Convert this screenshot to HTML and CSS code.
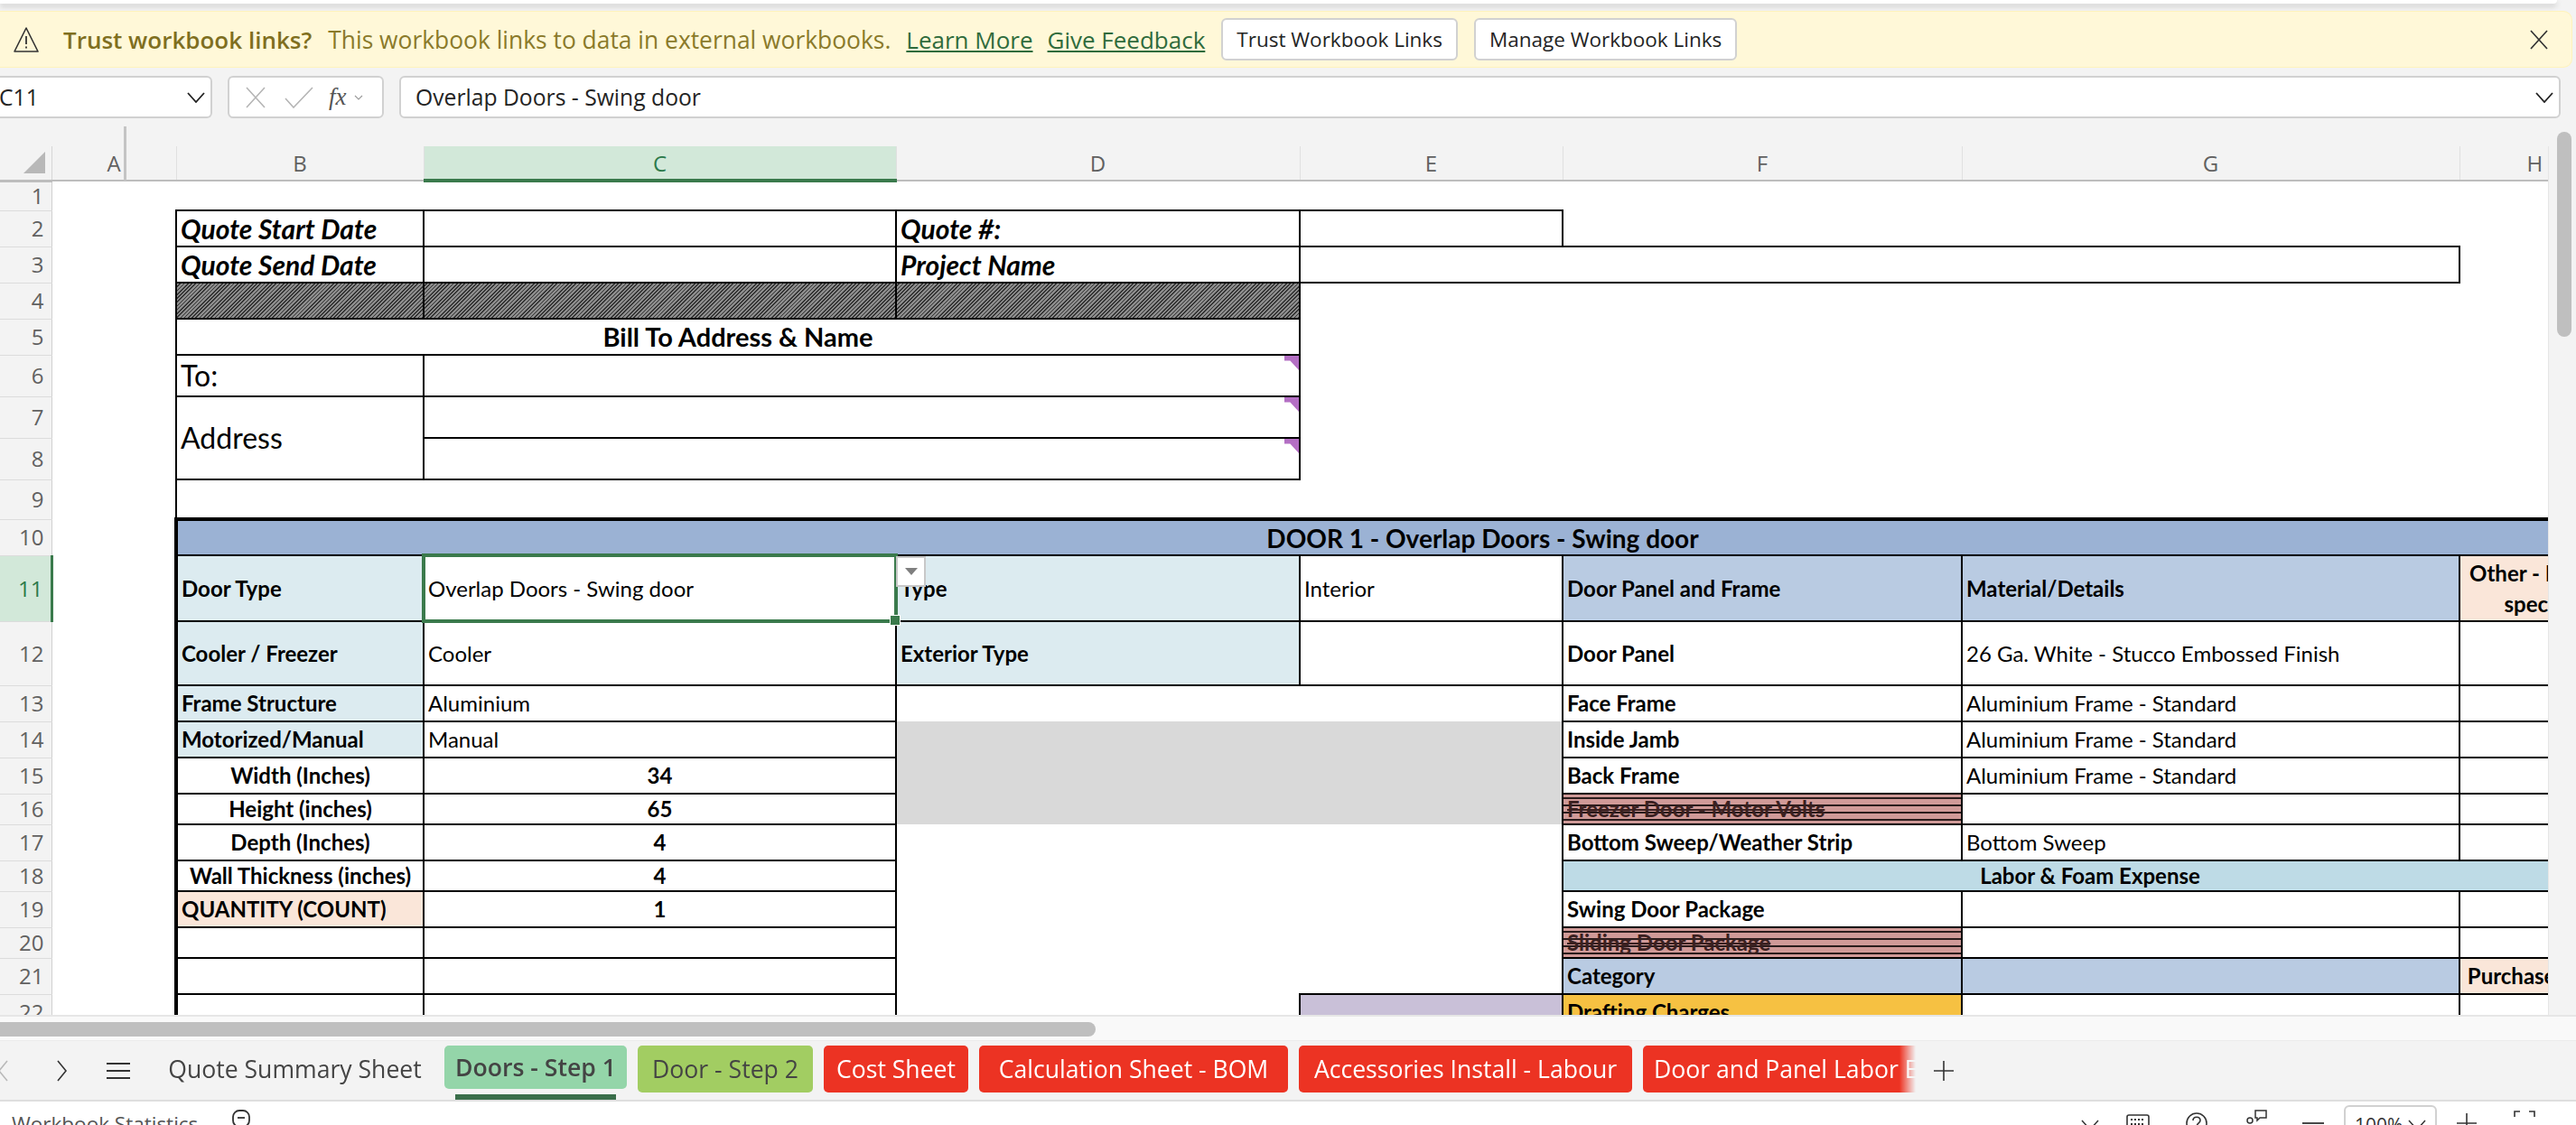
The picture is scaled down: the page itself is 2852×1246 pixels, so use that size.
FILE: index.html
```html
<!DOCTYPE html>
<html lang="en">

<head>
    <meta charset="UTF-8">
    <meta name="viewport" content="width=device-width, initial-scale=1.0">
    <title>Doors - Step 1</title>
    <link rel="stylesheet" href="styles.css">
</head>

<body>
    <div class="top-strip"></div>

    <div class="msgbar">
        <svg class="warn-icon" viewBox="0 0 30 30" width="30" height="30"><path d="M15 2 L28 28 H2 Z" fill="none" stroke="#333" stroke-width="1.6" stroke-linejoin="round"/><path d="M15 11 V20 M15 22.5 V24.5" stroke="#333" stroke-width="1.8"/></svg>
        <b class="msg-title">Trust workbook links?</b>
        <span class="msg-text">This workbook links to data in external workbooks.</span>
        <a class="msg-link">Learn More</a>
        <a class="msg-link">Give Feedback</a>
        <button class="msg-btn">Trust Workbook Links</button>
        <button class="msg-btn">Manage Workbook Links</button>
        <svg class="msg-close" viewBox="0 0 22 22" width="22" height="22"><path d="M2 1 L20 21 M20 1 L2 21" stroke="#333" stroke-width="1.7"/></svg>
    </div>

    <div class="formula-bar">
        <div class="name-box">
            <span class="name-text">C11</span>
            <svg viewBox="0 0 20 12" width="20" height="12"><path d="M1 1 L10 11 L19 1" fill="none" stroke="#222" stroke-width="1.8"/></svg>
        </div>
        <div class="fx-box">
            <svg viewBox="0 0 24 24" width="24" height="24"><path d="M2 1 L22 23 M22 1 L2 23" stroke="#b5b5b5" stroke-width="1.6"/></svg>
            <svg viewBox="0 0 32 24" width="32" height="24"><path d="M1 13 L10 23 L31 1" fill="none" stroke="#b5b5b5" stroke-width="1.6"/></svg>
            <span class="fx-text">fx</span>
            <svg viewBox="0 0 10 6" width="10" height="6"><path d="M1 1 L5 5 L9 1" fill="none" stroke="#999" stroke-width="1.1"/></svg>
        </div>
        <div class="formula-input">
            <span>Overlap Doors - Swing door</span>
            <svg viewBox="0 0 20 12" width="20" height="12"><path d="M1 1 L10 11 L19 1" fill="none" stroke="#222" stroke-width="1.8"/></svg>
        </div>
    </div>

    <div class="workspace">
        <div class="sheet-wrap">
            <table class="sheet">
                <colgroup>
                    <col class="c-rh"><col class="c-a"><col class="c-b"><col class="c-c"><col class="c-d">
                    <col class="c-e"><col class="c-f"><col class="c-g"><col class="c-h"><col class="c-i">
                </colgroup>
                <tr class="h-head">
                    <th class="corner"><span class="corner-mark"></span></th>
                    <th class="ch">A</th><th class="ch">B</th><th class="ch ch-sel">C</th><th class="ch">D</th>
                    <th class="ch">E</th><th class="ch">F</th><th class="ch">G</th><th class="ch ch-h">H</th><th class="ch"></th>
                </tr>
                <tr class="h33"><th class="rh">1</th></tr>
                <tr class="h40"><th class="rh">2</th><td></td>
                    <td class="box big it">Quote Start Date</td><td class="box"></td><td class="box big it">Quote #:</td><td class="box"></td></tr>
                <tr class="h40"><th class="rh">3</th><td></td>
                    <td class="box big it">Quote Send Date</td><td class="box"></td><td class="box big it">Project Name</td><td class="box" colspan="3"></td></tr>
                <tr class="h40"><th class="rh">4</th><td></td>
                    <td class="box hatch"></td><td class="box hatch"></td><td class="box hatch"></td></tr>
                <tr class="h40"><th class="rh">5</th><td></td>
                    <td class="box big bold center" colspan="3">Bill To Address &amp; Name</td></tr>
                <tr class="h46"><th class="rh">6</th><td></td>
                    <td class="box large">To:</td><td class="box note" colspan="2"></td></tr>
                <tr class="h46"><th class="rh">7</th><td></td>
                    <td class="box large" rowspan="2">Address</td><td class="box note" colspan="2"></td></tr>
                <tr class="h46"><th class="rh">8</th><td></td>
                    <td class="box note" colspan="2"></td></tr>
                <tr class="h44"><th class="rh">9</th><td></td><td class="left-edge"></td></tr>
                <tr class="h40"><th class="rh">10</th><td></td>
                    <td class="box title bold center door-title" colspan="8">DOOR 1 - Overlap Doors - Swing door</td></tr>
                <tr class="h73"><th class="rh rh-sel">11</th><td></td>
                    <td class="box edge bold pale">Door Type</td>
                    <td class="box sel">Overlap Doors - Swing door<span class="dd-btn"><svg viewBox="0 0 16 10" width="16" height="10"><path d="M1 1 H15 L8 9 Z" fill="#7f7f7f"/></svg></span></td>
                    <td class="box bold pale">Type</td><td class="box">Interior</td>
                    <td class="box bold steel">Door Panel and Frame</td><td class="box bold steel">Material/Details</td>
                    <td class="box bold center peach">Other - Please specify</td></tr>
                <tr class="h71"><th class="rh">12</th><td></td>
                    <td class="box edge bold pale">Cooler / Freezer</td><td class="box">Cooler</td>
                    <td class="box bold pale">Exterior Type</td><td class="box"></td>
                    <td class="box bold">Door Panel</td><td class="box">26 Ga. White - Stucco Embossed Finish</td><td class="box"></td></tr>
                <tr class="h40"><th class="rh">13</th><td></td>
                    <td class="box edge bold pale">Frame Structure</td><td class="box">Aluminium</td>
                    <td class="plain" colspan="2"></td>
                    <td class="box bold">Face Frame</td><td class="box">Aluminium Frame - Standard</td><td class="box"></td></tr>
                <tr class="h40"><th class="rh">14</th><td></td>
                    <td class="box edge bold pale">Motorized/Manual</td><td class="box">Manual</td>
                    <td class="grey" colspan="2" rowspan="3"></td>
                    <td class="box bold">Inside Jamb</td><td class="box">Aluminium Frame - Standard</td><td class="box"></td></tr>
                <tr class="h40"><th class="rh">15</th><td></td>
                    <td class="box edge bold center">Width (Inches)</td><td class="box bold center">34</td>
                    <td class="box bold">Back Frame</td><td class="box">Aluminium Frame - Standard</td><td class="box"></td></tr>
                <tr class="h34"><th class="rh">16</th><td></td>
                    <td class="box edge bold center">Height (inches)</td><td class="box bold center">65</td>
                    <td class="box bold struck">Freezer Door - Motor Volts</td><td class="box"></td><td class="box"></td></tr>
                <tr class="h40"><th class="rh">17</th><td></td>
                    <td class="box edge bold center">Depth (Inches)</td><td class="box bold center">4</td>
                    <td class="plain" colspan="2" rowspan="5"></td>
                    <td class="box bold">Bottom Sweep/Weather Strip</td><td class="box">Bottom Sweep</td><td class="box"></td></tr>
                <tr class="h34"><th class="rh">18</th><td></td>
                    <td class="box edge bold center">Wall Thickness (inches)</td><td class="box bold center">4</td>
                    <td class="box bold center labor" colspan="3">Labor &amp; Foam Expense</td></tr>
                <tr class="h40"><th class="rh">19</th><td></td>
                    <td class="box edge bold peach">QUANTITY (COUNT)</td><td class="box bold center">1</td>
                    <td class="box bold">Swing Door Package</td><td class="box"></td><td class="box"></td></tr>
                <tr class="h34"><th class="rh">20</th><td></td>
                    <td class="box edge"></td><td class="box"></td>
                    <td class="box bold struck">Sliding Door Package</td><td class="box"></td><td class="box"></td></tr>
                <tr class="h40"><th class="rh">21</th><td></td>
                    <td class="box edge"></td><td class="box"></td>
                    <td class="box bold steel">Category</td><td class="box steel"></td><td class="box bold center peach">Purchase Price</td></tr>
                <tr class="h40"><th class="rh">22</th><td></td>
                    <td class="box edge"></td><td class="box"></td><td class="plain"></td><td class="box lilac"></td>
                    <td class="box bold amber">Drafting Charges</td><td class="box"></td><td class="box"></td></tr>
            </table>
        </div>
        <div class="freeze-line"></div>
        <div class="vscroll"><div class="vthumb"></div></div>
    </div>

    <div class="hscroll"><div class="hthumb"></div></div>

    <div class="tabbar">
        <svg class="nav-icon nav-left" viewBox="0 0 12 24" width="12" height="24"><path d="M11 1 L2 12 L11 23" fill="none" stroke="#b9b9b9" stroke-width="1.6"/></svg>
        <svg class="nav-icon nav-right" viewBox="0 0 12 24" width="12" height="24"><path d="M1 1 L10 12 L1 23" fill="none" stroke="#333" stroke-width="1.6"/></svg>
        <svg class="nav-icon nav-menu" viewBox="0 0 26 20" width="26" height="20"><path d="M0 2 H26 M0 10 H26 M0 18 H26" stroke="#333" stroke-width="1.8"/></svg>
        <div class="tab-list">
            <div class="tab tab-quote">Quote Summary Sheet</div>
            <div class="tab tab-active">Doors - Step 1</div>
            <div class="tab tab-olive">Door - Step 2</div>
            <div class="tab tab-red tab-cost">Cost Sheet</div>
            <div class="tab tab-red tab-calc">Calculation Sheet - BOM</div>
            <div class="tab tab-red tab-acc">Accessories Install - Labour</div>
            <div class="tab tab-red">Door and Panel Labor Estimate</div>
        </div>
        <svg class="add-tab" viewBox="0 0 24 24" width="24" height="24"><path d="M12 1 V23 M1 12 H23" stroke="#333" stroke-width="1.6"/></svg>
    </div>

    <div class="statusbar">
        <span class="status-text">Workbook Statistics</span>
        <svg class="status-calc" viewBox="0 0 24 24" width="24" height="24"><rect x="3" y="5" width="18" height="18" rx="7" fill="none" stroke="#333" stroke-width="1.8"/><path d="M8 13 H16" stroke="#333" stroke-width="1.8"/></svg>
        <div class="status-right">
            <svg viewBox="0 0 20 12" width="20" height="12" class="s-chev"><path d="M1 1 L10 11 L19 1" fill="none" stroke="#333" stroke-width="1.5"/></svg>
            <svg viewBox="0 0 26 24" width="26" height="24" class="s-key"><rect x="1" y="1" width="24" height="22" rx="2" fill="none" stroke="#333" stroke-width="1.6"/><path d="M5 6 H21 M5 11 H21" stroke="#333" stroke-width="1.8" stroke-dasharray="2 2"/></svg>
            <svg viewBox="0 0 24 24" width="24" height="24" class="s-help"><circle cx="12" cy="12" r="11" fill="none" stroke="#333" stroke-width="1.6"/><path d="M8 9 C8 4 16 4 16 9 C16 12 12 12 12 16 M12 18 V20" fill="none" stroke="#333" stroke-width="1.6"/></svg>
            <svg viewBox="0 0 24 18" width="24" height="18" class="s-chat"><circle cx="4" cy="12" r="3" fill="none" stroke="#333" stroke-width="1.5"/><path d="M10 1 H22 V9 H15 L12 12 V9 H10 Z" fill="none" stroke="#333" stroke-width="1.5"/></svg>
            <svg viewBox="0 0 24 4" width="24" height="4" class="s-minus"><path d="M0 2 H24" stroke="#333" stroke-width="1.8"/></svg>
            <div class="zoom-box">100%<svg viewBox="0 0 20 12" width="20" height="12"><path d="M1 1 L10 11 L19 1" fill="none" stroke="#333" stroke-width="1.5"/></svg></div>
            <svg viewBox="0 0 24 24" width="24" height="24" class="s-plus"><path d="M12 1 V23 M1 12 H23" stroke="#333" stroke-width="1.6"/></svg>
            <svg viewBox="0 0 24 24" width="24" height="24" class="s-full"><path d="M1 7 V1 H7 M17 1 H23 V7 M1 17 V23 H7 M17 23 H23 V17" fill="none" stroke="#333" stroke-width="1.6"/></svg>
        </div>
    </div>
</body>

</html>
```

FILE: styles.css
```css
* {
    box-sizing: border-box;
}

html,
body {
    height: 100%;
}

body {
    margin: 0;
    overflow: hidden;
    display: flex;
    flex-direction: column;
    background-color: #f3f3f3;
    font-family: "Open Sans", sans-serif;
    color: #242424;
}

.top-strip {
    flex: none;
    height: 4px;
    width: 2831px;
    background-color: #fff;
    border-radius: 0 0 6px 0;
    box-shadow: 0 3px 6px rgba(0, 0, 0, 0.18);
}

/* message bar */
.msgbar {
    flex: none;
    height: 63px;
    margin: 8px 4px 0 0;
    padding-left: 14px;
    display: flex;
    align-items: center;
    background-color: #fff8d8;
    border: 1px solid #fff3bc;
    border-left: 0;
    border-radius: 0 10px 10px 0;
    font-size: 26px;
}

.warn-icon {
    margin-right: 26px;
}

.msg-title {
    color: #7f6f1f;
    font-weight: 600;
    margin-right: 18px;
}

.msg-text {
    color: #8a7a2a;
    font-size: 26.4px;
    margin-right: 17px;
}

.msg-link {
    color: #2f6b3c;
    text-decoration: underline;
    margin-right: 16px;
}

.msg-btn {
    height: 47px;
    margin-left: 2px;
    margin-right: 16px;
    padding: 0 15px;
    background-color: #fff;
    border: 2px solid #d1d1d1;
    border-radius: 6px;
    font-family: "Open Sans", sans-serif;
    font-size: 22.5px;
    color: #242424;
}

.msg-close {
    margin-left: auto;
    margin-right: 25px;
}

/* formula bar */
.formula-bar {
    flex: none;
    height: 47px;
    margin-top: 9px;
    padding-right: 17px;
    display: flex;
    gap: 17px;
}

.name-box,
.fx-box,
.formula-input {
    display: flex;
    align-items: center;
    background-color: #fff;
    border: 2px solid #d1d1d1;
    border-radius: 6px;
    font-size: 24.7px;
}

.name-box {
    width: 235px;
    border-left: 0;
    border-radius: 0 6px 6px 0;
    justify-content: space-between;
    padding-right: 6px;
}

.name-text {
    margin-left: -1px;
}

.fx-box {
    width: 173px;
    padding-left: 17px;
    gap: 20px;
    color: #555;
}

.fx-text {
    font-family: "Liberation Serif", serif;
    font-style: italic;
    font-size: 27px;
    margin-left: -3px;
    margin-right: -12px;
}

.formula-input {
    flex: 1;
    justify-content: space-between;
    padding: 0 6px 0 16px;
}

/* sheet */
.workspace {
    position: relative;
    flex: 1;
    min-height: 0;
    display: flex;
    padding-top: 31px;
}

.sheet-wrap {
    width: 2822px;
    overflow: hidden;
    background-color: #fff;
    border-right: 1px solid #e6e6e6;
}

.freeze-line {
    position: absolute;
    left: 137px;
    top: 9px;
    width: 3px;
    height: 60px;
    background-color: #c4c4c4;
}

.sheet {
    border-collapse: collapse;
    table-layout: fixed;
    width: 3087px;
    font-family: Lato, "Liberation Sans", sans-serif;
    font-size: 24px;
    color: #000;
}

.c-rh { width: 57px; }
.c-a { width: 138px; }
.c-b { width: 274px; }
.c-c { width: 523px; }
.c-d { width: 447px; }
.c-e { width: 291px; }
.c-f { width: 442px; }
.c-g { width: 551px; }
.c-h { width: 175px; }
.c-i { width: 189px; }

.h-head { height: 38px; }
.h33 { height: 33px; }
.h34 { height: 34px; }
.h40 { height: 40px; }
.h44 { height: 44px; }
.h46 { height: 46px; }
.h71 { height: 71px; }
.h73 { height: 73px; }

td {
    padding: 0 0 0 4px;
    line-height: 28px;
    white-space: nowrap;
    overflow: hidden;
}

.ch {
    position: relative;
    padding: 0;
    background-color: #f3f3f3;
    font-family: "Open Sans", sans-serif;
    font-size: 24px;
    font-weight: 400;
    color: #616161;
    border-left: 1px solid #e0e0e0;
    border-bottom: 2px solid #bdbdbd;
}

.ch-sel {
    background-color: #d2e8d9;
    color: #2c7a4b;
    border-bottom: 4px solid #3a7a4c;
}

.ch-h {
    text-align: left;
    padding-left: 74px;
}

.corner {
    position: relative;
    padding: 0;
    background-color: #f3f3f3;
    border-bottom: 3px solid #bdbdbd;
    border-right: 1px solid #d6d6d6;
}

.corner-mark {
    position: absolute;
    left: 26px;
    top: 6px;
    width: 24px;
    height: 24px;
    background-color: #b8b8b8;
    clip-path: polygon(100% 0, 100% 100%, 0 100%);
}

.rh {
    padding: 0 8px 0 0;
    line-height: 24px;
    text-align: right;
    background-color: #f3f3f3;
    font-family: "Open Sans", sans-serif;
    font-size: 24px;
    font-weight: 400;
    color: #616161;
    border-bottom: 1px solid #dcdcdc;
    border-right: 1px solid #d0d0d0;
}

.rh-sel {
    background-color: #d2e8d9;
    color: #2c7a4b;
    border-right: 3px solid #3a7a4c;
}

.box {
    border: 2px solid #000;
}

.edge {
    border-left-width: 4px;
}

.left-edge {
    border-left: 2px solid #000;
}

.plain {
    background-color: #fff;
}

.big {
    font-size: 29px;
}

.large {
    font-size: 32px;
}

.title {
    font-size: 28px;
}

.bold {
    font-weight: 700;
}

.it {
    font-size: 30px;
    font-style: italic;
    font-weight: 700;
}

.center {
    text-align: center;
    padding-left: 0;
}

.hatch {
    background-image: repeating-linear-gradient(-45deg, #333 0 1.2px, #8c8c8c 1.2px 3px);
}

.note {
    position: relative;
}

.note::after {
    content: "";
    position: absolute;
    right: 0;
    top: 0;
    width: 16px;
    height: 16px;
    background-color: #b46fc4;
    clip-path: polygon(0 0, 100% 0, 100% 100%, 40% 35%, 0 35%);
}

.door-title {
    background-color: #9bb2d4;
    border-top-width: 4px;
    border-left-width: 4px;
}

.pale { background-color: #dcebf0; }
.steel { background-color: #b9cbe2; }
.peach { background-color: #fae6d9; }
.labor { background-color: #bedbe6; }
.lilac { background-color: #c9c0d8; }
.amber { background-color: #f6c142; }
.grey { background-color: #d9d9d9; }

.peach.center {
    white-space: normal;
    line-height: 34px;
}

.struck {
    background-color: #d09a98;
    background-image: linear-gradient(#d09a98 0 6px, #2a1c1c 6px 8px);
    background-size: 100% 8px;
    background-position: 0 5px;
    text-decoration: line-through;
    color: #3a2020;
}

.sel {
    position: relative;
    overflow: visible;
}

.sel::after {
    content: "";
    position: absolute;
    inset: -3px;
    border: 4px solid #3a7a4c;
    pointer-events: none;
}

.sel::before {
    content: "";
    position: absolute;
    right: -6px;
    bottom: -6px;
    width: 10px;
    height: 10px;
    background-color: #3a7a4c;
    border: 1px solid #fff;
    z-index: 1;
}

.dd-btn {
    position: absolute;
    left: 100%;
    top: 0;
    width: 33px;
    height: 34px;
    margin-left: 1px;
    display: flex;
    align-items: center;
    justify-content: center;
    background-color: #fff;
    border: 2px solid #c8c8c8;
    z-index: 2;
}

/* scrollbars */
.vscroll {
    flex: 1;
    margin-top: -22px;
    padding: 6px 5px 0 9px;
}

.vthumb {
    height: 227px;
    background-color: #bfbfbf;
    border-radius: 8px;
}

.hscroll {
    flex: none;
    height: 28px;
    padding-top: 6px;
    background-color: #f9f9f9;
    border-top: 2px solid #e6e6e6;
}

.hthumb {
    width: 1213px;
    height: 16px;
    background-color: #bfbfbf;
    border-radius: 0 8px 8px 0;
}

/* sheet tabs */
.tabbar {
    flex: none;
    height: 68px;
    display: flex;
    align-items: flex-start;
    background-color: #f3f3f3;
    border-bottom: 2px solid #dedede;
    border-top: 1px solid #ececec;
}

.nav-icon {
    flex: none;
    margin-top: 21px;
}

.nav-left {
    margin-left: -3px;
}

.nav-right {
    margin-left: 54px;
}

.nav-menu {
    margin-left: 43px;
    margin-top: 23px;
}

.tab-list {
    flex: none;
    width: 1948px;
    margin-left: 29px;
    height: 65px;
    padding-top: 5px;
    display: flex;
    gap: 12px;
    overflow: hidden;
    white-space: nowrap;
    font-size: 26.6px;
    mask-image: linear-gradient(to right, #000 calc(100% - 18px), transparent);
}

.tab {
    flex: none;
    height: 52px;
    padding: 0 12px;
    display: flex;
    align-items: center;
    justify-content: center;
    border-radius: 5px;
    color: #444;
}

.tab-quote { width: 307px; }
.tab-cost { width: 160px; }
.tab-calc { width: 342px; }
.tab-acc { width: 369px; }

.tab-active {
    position: relative;
    width: 202px;
    height: 48px;
    background-color: #94d5a9;
    font-weight: 600;
}

.tab-active::after {
    content: "";
    position: absolute;
    left: 12px;
    right: 12px;
    bottom: -12px;
    height: 6px;
    background-color: #3a6e4a;
}

.tab-olive {
    width: 194px;
    background-color: #a2cd62;
}

.tab-red {
    background-color: #ec3323;
    color: #fff;
}

.add-tab {
    flex: none;
    margin-left: 19px;
    margin-top: 21px;
}

/* status bar */
.statusbar {
    flex: none;
    height: 26px;
    overflow: hidden;
    display: flex;
    background-color: #fff;
    font-size: 22.5px;
    color: #555;
}

.status-text {
    margin-left: 13px;
    margin-top: 9px;
}

.status-calc {
    margin-left: 36px;
    margin-top: 5px;
}

.status-right {
    margin-left: auto;
    margin-right: 45px;
    display: flex;
    align-items: flex-start;
    flex: none;
}

.s-chev { margin-top: 20px; }
.s-key { margin-left: 30px; margin-top: 14px; }
.s-help { margin-left: 40px; margin-top: 12px; }
.s-chat { margin-left: 43px; margin-top: 9px; }
.s-minus { margin-left: 38px; margin-top: 22px; }
.s-plus { margin-left: 21px; margin-top: 12px; }
.s-full { margin-left: 40px; margin-top: 10px; }

.zoom-box {
    margin-left: 22px;
    margin-top: 4px;
    width: 103px;
    height: 40px;
    padding: 6px 0 0 10px;
    display: flex;
    gap: 6px;
    border: 2px solid #d1d1d1;
    border-radius: 6px;
    font-size: 21px;
    color: #333;
}

.zoom-box svg {
    margin-top: 8px;
}
```
